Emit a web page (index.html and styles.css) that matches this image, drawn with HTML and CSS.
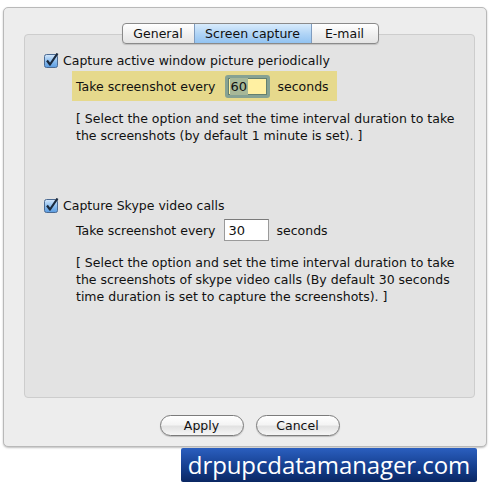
FILE: index.html
```html
<!DOCTYPE html>
<html>
<head>
<meta charset="utf-8">
<link rel="stylesheet" href="styles.css">
</head>
<body>
<div class="window">
  <div class="tabs">
    <span class="tab">General</span>
    <span class="tab active">Screen capture</span>
    <span class="tab">E-mail</span>
  </div>
  <div class="group">
    <label class="check">
      <svg class="box" width="15" height="16" viewBox="0 0 15 16">
        <defs>
          <linearGradient id="cb1" x1="0" y1="0" x2="0" y2="1">
            <stop offset="0" stop-color="#d6e8fb"/>
            <stop offset="0.5" stop-color="#8ebfef"/>
            <stop offset="1" stop-color="#5a9be0"/>
          </linearGradient>
        </defs>
        <rect x="0.5" y="1.5" width="13" height="13" rx="2" fill="url(#cb1)" stroke="#4b6a92"/>
        <path d="M3 7.5 L6 11.5 L13.5 0.5" fill="none" stroke="#1b2a3e" stroke-width="2.2" stroke-linejoin="round"/>
      </svg>
      <span>Capture active window picture periodically</span>
    </label>
    <div class="interval focus">
      <span>Take screenshot every</span>
      <span class="field focused"><span class="sel">60</span></span>
      <span>seconds</span>
    </div>
    <p class="note first">[ Select the option and set the time interval duration to take the screenshots (by default 1 minute is set). ]</p>

    <label class="check second">
      <svg class="box" width="15" height="16" viewBox="0 0 15 16">
        <defs>
          <linearGradient id="cb2" x1="0" y1="0" x2="0" y2="1">
            <stop offset="0" stop-color="#d6e8fb"/>
            <stop offset="0.5" stop-color="#8ebfef"/>
            <stop offset="1" stop-color="#5a9be0"/>
          </linearGradient>
        </defs>
        <rect x="0.5" y="1.5" width="13" height="13" rx="2" fill="url(#cb2)" stroke="#4b6a92"/>
        <path d="M3 7.5 L6 11.5 L13.5 0.5" fill="none" stroke="#1b2a3e" stroke-width="2.2" stroke-linejoin="round"/>
      </svg>
      <span>Capture Skype video calls</span>
    </label>
    <div class="interval plain">
      <span>Take screenshot every</span>
      <span class="field">30</span>
      <span>seconds</span>
    </div>
    <p class="note">[ Select the option and set the time interval duration to take the screenshots of skype video calls (By default 30 seconds time duration is set to capture the screenshots). ]</p>
  </div>
  <div class="actions">
    <button class="btn">Apply</button>
    <button class="btn">Cancel</button>
  </div>
</div>
<div class="brand"><span>drpupcdatamanager.com</span></div>
</body>
</html>
```
FILE: styles.css
```css
html, body {
  margin: 0;
  padding: 0;
  background: #ffffff;
}

body {
  font-family: "DejaVu Sans", "Liberation Sans", sans-serif;
  font-size: 12px;
  color: #111;
}

.window {
  margin: 7px 3px 0 3px;
  width: 482px;
  height: 438px;
  background: #ededed;
  border: 1px solid #b9b9b9;
  border-radius: 5px;
  box-shadow: 0 1px 2px rgba(0, 0, 0, 0.25);
  display: flex;
  flex-direction: column;
}

.tabs {
  display: flex;
  align-self: center;
  margin: 15px 0 0 10px;
  height: 19px;
  border: 1px solid #8a8a8a;
  border-radius: 4px;
  background: linear-gradient(#ffffff, #f1f1f1 50%, #e4e4e4);
  box-shadow: 0 1px 1px rgba(0, 0, 0, 0.15);
  position: relative;
  z-index: 1;
}

.tab {
  display: flex;
  align-items: center;
  justify-content: center;
  font-size: 12.5px;
  color: #111;
  border-left: 1px solid #a0a0a0;
}

.tab:first-child {
  border-left: none;
  width: 71px;
}

.tab.active {
  width: 116px;
  background: linear-gradient(#d8ebfc, #b2d5f6 50%, #92c3f1);
  border-left-color: #7f9cbf;
  border-right: 1px solid #7f9cbf;
}

.tab:last-child {
  border-left: none;
  width: 66px;
}

.group {
  margin: -10px 11px 0 20px;
  height: 345px;
  padding-top: 17px;
  background: #e3e3e3;
  border: 1px solid #cdcdcd;
  border-radius: 4px;
}

.check {
  display: flex;
  align-items: center;
  height: 17px;
  margin-left: 19px;
  font-size: 12.5px;
}

.check .box {
  margin-right: 4px;
  flex: none;
}

.check.second {
  margin-top: 53px;
}

.interval {
  display: flex;
  align-items: center;
  font-size: 12.5px;
}

.interval.focus {
  margin: 2px 0 0 47px;
  width: 261px;
  height: 30px;
  padding-left: 4px;
  background: #e6d98c;
}

.interval.plain {
  margin: 5px 0 0 51px;
  height: 22px;
}

.field {
  display: inline-flex;
  align-items: center;
  box-sizing: border-box;
  width: 45px;
  height: 22px;
  margin: 0 8px 0 8px;
  padding-left: 4px;
  background: #ffffff;
  border: 1px solid #9a9a9a;
  border-top-color: #7a7a7a;
  font-size: 13px;
}

.field.focused {
  height: 23px;
  margin-left: 9px;
  background: #fff0a2;
  border: 3px solid #86a293;
  border-radius: 3px;
  box-shadow: inset 0 0 0 1px #64806f;
  padding-left: 2px;
}

.sel {
  background: #a7b898;
  padding: 0 1px;
  line-height: 17px;
}

.note {
  margin: 13px 0 0 51px;
  width: 380px;
  font-size: 12.5px;
  line-height: 17px;
}

.note.first {
  margin-top: 9px;
}

.actions {
  display: flex;
  justify-content: center;
  gap: 12px;
  margin: 17px 11px 0 20px;
}

.btn {
  width: 84px;
  height: 21px;
  padding: 0;
  font-family: "DejaVu Sans", "Liberation Sans", sans-serif;
  font-size: 12.5px;
  color: #111;
  border: 1px solid #7b7b7b;
  border-radius: 11px;
  background: linear-gradient(#ffffff, #f4f4f4 45%, #e2e2e2 55%, #f6f6f6);
  box-shadow: 0 1px 1px rgba(0, 0, 0, 0.2);
}

.brand {
  margin: 1px 0 0 181px;
  width: 296px;
  height: 34px;
  display: flex;
  align-items: center;
  justify-content: center;
  background: linear-gradient(#2b5fbf, #153f8f 55%, #0a2763);
  border-radius: 2px;
}

.brand span {
  font-family: "Open Sans", "Noto Sans", sans-serif;
  font-size: 24px;
  color: #ffffff;
  letter-spacing: -0.1px;
  line-height: 1;
}
```
